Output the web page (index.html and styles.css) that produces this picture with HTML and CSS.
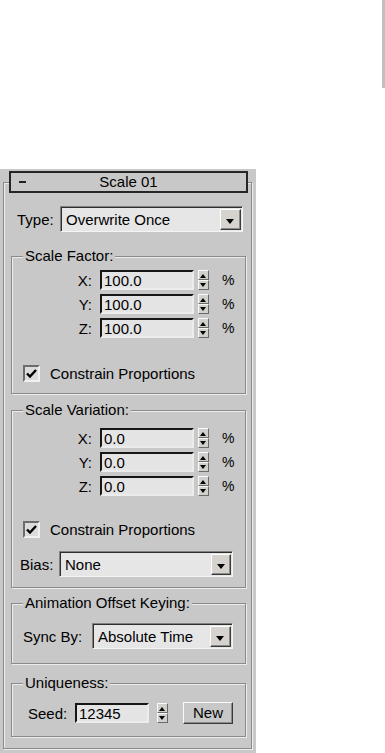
FILE: index.html
```html
<!DOCTYPE html>
<html lang="en">
<head>
  <meta charset="UTF-8">
  <meta name="viewport" content="width=device-width, initial-scale=1.0">
  <title>Scale 01</title>
  <link rel="stylesheet" href="styles.css">
</head>
<body>
  <div class="top">
    <div class="edge"></div>
  </div>

  <div class="panel">
    <div class="rollout">
      <div class="title">
        <span class="minus"></span>
        <span class="title-text">Scale 01</span>
      </div>

      <div class="field-row type-row">
        <span class="lbl">Type:</span>
        <div class="dropdown">Overwrite Once<span class="drop-btn"></span></div>
      </div>

      <div class="group factor">
        <span class="legend">Scale Factor:</span>
        <div class="spin-row first">
          <span class="axis">X:</span><span class="num">100.0</span>
          <span class="spinner"><i class="up"></i><i class="down"></i></span><span class="pct">%</span>
        </div>
        <div class="spin-row">
          <span class="axis">Y:</span><span class="num">100.0</span>
          <span class="spinner"><i class="up"></i><i class="down"></i></span><span class="pct">%</span>
        </div>
        <div class="spin-row">
          <span class="axis">Z:</span><span class="num">100.0</span>
          <span class="spinner"><i class="up"></i><i class="down"></i></span><span class="pct">%</span>
        </div>
        <div class="check-row">
          <span class="check"><svg width="13" height="13" viewBox="0 0 13 13"><path d="M2 6.5 L5 9.5 L11 3" fill="none" stroke="#000" stroke-width="2.4"/></svg></span>
          Constrain Proportions
        </div>
      </div>

      <div class="group variation">
        <span class="legend">Scale Variation:</span>
        <div class="spin-row first">
          <span class="axis">X:</span><span class="num">0.0</span>
          <span class="spinner"><i class="up"></i><i class="down"></i></span><span class="pct">%</span>
        </div>
        <div class="spin-row">
          <span class="axis">Y:</span><span class="num">0.0</span>
          <span class="spinner"><i class="up"></i><i class="down"></i></span><span class="pct">%</span>
        </div>
        <div class="spin-row">
          <span class="axis">Z:</span><span class="num">0.0</span>
          <span class="spinner"><i class="up"></i><i class="down"></i></span><span class="pct">%</span>
        </div>
        <div class="check-row">
          <span class="check"><svg width="13" height="13" viewBox="0 0 13 13"><path d="M2 6.5 L5 9.5 L11 3" fill="none" stroke="#000" stroke-width="2.4"/></svg></span>
          Constrain Proportions
        </div>
        <div class="field-row bias-row">
          <span class="lbl">Bias:</span>
          <div class="dropdown">None<span class="drop-btn"></span></div>
        </div>
      </div>

      <div class="group offset">
        <span class="legend">Animation Offset Keying:</span>
        <div class="field-row sync-row">
          <span class="lbl">Sync By:</span>
          <div class="dropdown">Absolute Time<span class="drop-btn"></span></div>
        </div>
      </div>

      <div class="group unique">
        <span class="legend">Uniqueness:</span>
        <div class="seed-row">
          <span class="lbl">Seed:</span><span class="num">12345</span>
          <span class="spinner"><i class="up"></i><i class="down"></i></span>
          <span class="btn">New</span>
        </div>
      </div>
    </div>
  </div>
</body>
</html>
```

FILE: styles.css
```css
body {
  margin: 0;
  background: #fff;
  font-family: "Liberation Sans", Arial, sans-serif;
  font-size: 15px;
  color: #000;
}
.top {
  height: 169px;
  display: flex;
  justify-content: flex-end;
}
.edge {
  width: 3px;
  height: 88px;
  background: #c0c0c0;
}
.panel {
  width: 256px;
  height: 584px;
  box-sizing: border-box;
  background: #c8c8c8;
  padding: 13px 0 0 3px;
}
.rollout {
  width: 249px;
  height: 567px;
  box-sizing: border-box;
  border: 1px solid #8a8a8a;
  box-shadow: inset 1px 1px 0 #ececec, 1px 1px 0 #ececec;
  padding: 0 5px 0 7px;
}
.title {
  height: 22px;
  box-sizing: border-box;
  margin: -12px -2px 0 -2px;
  border: 2px solid #262626;
  background: #c8c8c8;
  position: relative;
  display: flex;
  align-items: center;
  justify-content: center;
  line-height: 18px;
}
.minus {
  position: absolute;
  left: 8px;
  top: 8px;
  width: 7px;
  height: 2px;
  background: #222;
}

/* rows */
.field-row {
  display: flex;
  align-items: center;
  height: 26px;
}
.lbl { flex: none; }
.type-row { margin-top: 13px; padding-left: 6px; }
.type-row .lbl { width: 43px; }
.type-row .dropdown { width: 183px; }

.dropdown {
  position: relative;
  height: 26px;
  box-sizing: border-box;
  border: 1px solid;
  border-color: #808080 #f4f4f4 #f4f4f4 #808080;
  box-shadow: inset 1px 1px 0 #2e2e2e;
  background: #e6e6e6;
  padding-left: 5px;
  line-height: 25px;
}
.drop-btn {
  position: absolute;
  right: 1px;
  top: 2px;
  bottom: 1px;
  width: 21px;
  box-sizing: border-box;
  background: #d6d3ce;
  border: 1px solid;
  border-color: #fff #3a3a3a #3a3a3a #fff;
  box-shadow: inset -1px -1px 0 #8a8a8a;
}
.drop-btn::after {
  content: "";
  position: absolute;
  left: 5px;
  top: 9px;
  border-left: 4px solid transparent;
  border-right: 4px solid transparent;
  border-top: 5px solid #000;
}

/* group boxes */
.group {
  width: 235px;
  box-sizing: border-box;
  border: 1px solid #8a8a8a;
  box-shadow: inset 1px 1px 0 #ececec, 1px 1px 0 #ececec;
}
.legend {
  display: table;
  height: 16px;
  line-height: 16px;
  margin: -9px 0 0 11px;
  padding: 0 2px;
  background: #c8c8c8;
}
.factor { margin-top: 24px; padding-bottom: 10px; }
.variation { margin-top: 16px; padding-bottom: 10px; }
.offset { margin-top: 15px; padding-bottom: 14px; }
.unique { margin-top: 19px; padding-bottom: 12px; }

.spin-row {
  display: flex;
  align-items: center;
  height: 20px;
  margin-top: 4px;
}
.spin-row.first { margin-top: 6px; }
.variation .spin-row.first { margin-top: 10px; }
.axis {
  width: 80px;
  text-align: right;
  margin-right: 8px;
}
.num {
  width: 94px;
  height: 20px;
  box-sizing: border-box;
  border: 2px solid;
  border-color: #161616 #ececec #ececec #161616;
  background: #e4e4e4;
  padding-left: 2px;
  line-height: 17px;
}
.spinner {
  width: 11px;
  height: 20px;
  margin-left: 4px;
  display: flex;
  flex-direction: column;
}
.spinner i {
  flex: 1;
  position: relative;
  background: #d2d0cc;
  border: 1px solid;
  border-color: #fafafa #6a6a6a #6a6a6a #fafafa;
}
.spinner i::after {
  content: "";
  position: absolute;
  left: 1px;
  border-left: 3.5px solid transparent;
  border-right: 3.5px solid transparent;
}
.spinner .up::after { top: 3px; border-bottom: 4px solid #000; }
.spinner .down::after { top: 2px; border-top: 4px solid #000; }
.pct { margin-left: 13px; font-size: 14px; }

.check-row {
  display: flex;
  align-items: center;
  height: 20px;
  padding-left: 11px;
  margin-top: 25px;
}
.variation .check-row { margin-top: 23px; }
.check {
  width: 17px;
  height: 17px;
  box-sizing: border-box;
  border: 2px solid;
  border-color: #6c6c6c #f0f0f0 #f0f0f0 #6c6c6c;
  background: #dcdcdc;
  display: flex;
  align-items: center;
  justify-content: center;
  margin-right: 10px;
}

.bias-row { margin-top: 12px; padding-left: 8px; }
.bias-row .lbl { width: 39px; }
.bias-row .dropdown { width: 174px; }
.bias-row .drop-btn { width: 20px; }

.sync-row { margin-top: 12px; padding-left: 11px; }
.sync-row .lbl { width: 69px; }
.sync-row .dropdown { width: 141px; }

.seed-row {
  display: flex;
  align-items: center;
  height: 22px;
  margin-top: 11px;
  padding-left: 16px;
}
.seed-row .lbl { width: 47px; }
.seed-row .num { width: 74px; }
.seed-row .spinner { margin-left: 8px; }
.btn {
  margin-left: 15px;
  width: 50px;
  height: 22px;
  box-sizing: border-box;
  border: 1px solid;
  border-color: #fafafa #3a3a3a #3a3a3a #fafafa;
  box-shadow: inset -1px -1px 0 #8a8a8a;
  background: #c8c8c8;
  text-align: center;
  line-height: 20px;
}
```
